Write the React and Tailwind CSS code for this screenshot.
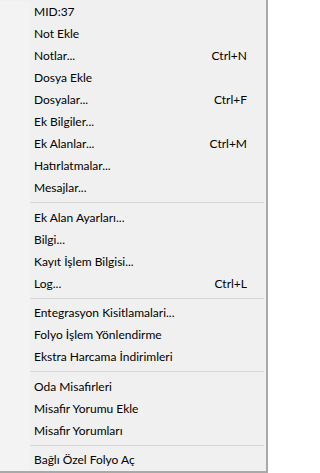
import React from "react";

// Context menu sections; sep marks a separator (height varies 7/8px like the original)
const items = [
  { label: "MID:37" },
  { label: "Not Ekle" },
  { label: "Notlar...", shortcut: "Ctrl+N" },
  { label: "Dosya Ekle" },
  { label: "Dosyalar...", shortcut: "Ctrl+F" },
  { label: "Ek Bilgiler..." },
  { label: "Ek Alanlar...", shortcut: "Ctrl+M" },
  { label: "Hatırlatmalar..." },
  { label: "Mesajlar..." },
  { sep: "flex h-[8px]" },
  { label: "Ek Alan Ayarları..." },
  { label: "Bilgi..." },
  { label: "Kayıt İşlem Bilgisi..." },
  { label: "Log...", shortcut: "Ctrl+L" },
  { sep: "flex h-[7px]" },
  { label: "Entegrasyon Kisitlamalari..." },
  { label: "Folyo İşlem Yönlendirme" },
  { label: "Ekstra Harcama İndirimleri" },
  { sep: "flex h-[8px]" },
  { label: "Oda Misafirleri" },
  { label: "Misafir Yorumu Ekle" },
  { label: "Misafir Yorumları" },
  { sep: "flex h-[7px]" },
  { label: "Bağlı Özel Folyo Aç" },
];

function MenuRow({ label, shortcut }) {
  return (
    <div className="flex h-[22px] items-center leading-[22px]">
      <div className="w-[30px] self-stretch bg-[#f3f3f3]" />
      <div className="flex flex-1 justify-between pl-[4px] pr-[19px]">
        <span>{label}</span>
        {shortcut && <span>{shortcut}</span>}
      </div>
    </div>
  );
}

function Separator({ cls }) {
  return (
    <div className={cls}>
      <div className="w-[30px] bg-[#f3f3f3]" />
      <div className="flex-1 pr-[2px] pt-[3px]">
        <div className="h-px bg-[#d7d7d7]" />
      </div>
    </div>
  );
}

export default function App() {
  return (
    <div
      className="h-[473px] w-[268px] border-r-2 border-b-2 border-[#a9a9a9] bg-[#f0f0f0] pt-px text-[12px] text-black"
      style={{ fontFamily: '"Segoe UI", Lato, "Open Sans", sans-serif' }}
    >
      {items.map((it, i) =>
        it.sep ? <Separator key={i} cls={it.sep} /> : <MenuRow key={i} {...it} />
      )}
    </div>
  );
}
